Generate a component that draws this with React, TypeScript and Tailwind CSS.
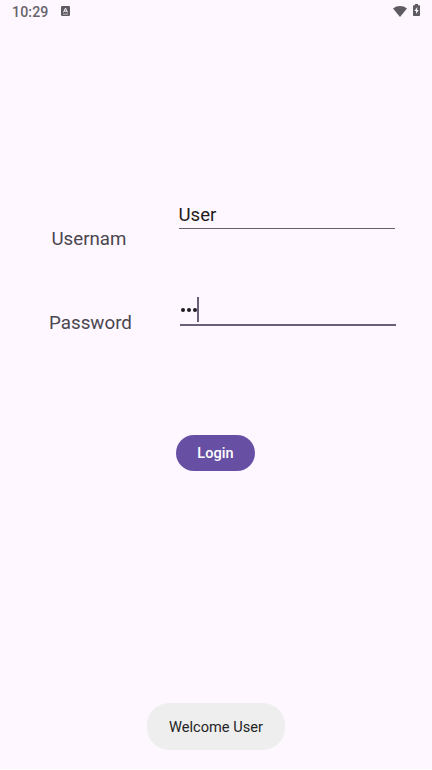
import React from "react";

function StatusBar() {
  return (
    <header className="flex h-[22px] items-center pl-[12px] pr-[12px] text-[#5f5b62]">
      <span className="w-[37px] whitespace-nowrap pt-[2px] text-[14.2px] font-medium leading-[22px] tracking-[0.1px] text-[#68646b]">10:29</span>
      <svg className="ml-[12px]" width="9" height="10" viewBox="0 0 9 10">
        <rect width="9" height="10" rx="1.2" fill="#5f5b62" />
        <path d="M2.5 6.4 4.5 2.1 6.5 6.4M3.3 5.2H5.7" fill="none" stroke="#fef7ff" strokeWidth="1" />
        <path d="M2 8.2H7" fill="none" stroke="#fef7ff" strokeWidth="0.6" />
      </svg>
      <div className="ml-auto flex items-center gap-[6px]">
        <svg width="14" height="11" viewBox="0 0 14 11">
          <path d="M0 2.5C4-.8 10-.8 14 2.5L7 11Z" fill="#5f5b62" />
        </svg>
        <svg className="-mt-[2px]" width="7" height="12" viewBox="0 0 7 12">
          <path d="M2 0H5V1.2H6.3Q7 1.2 7 2V11.2Q7 12 6.3 12H.7Q0 12 0 11.2V2Q0 1.2.7 1.2H2Z" fill="#5f5b62" />
          <path d="M4.3 3 1.4 7H3.1V10L5.7 6H4.1Z" fill="#fef7ff" />
        </svg>
      </div>
    </header>
  );
}

export default function App() {
  return (
    <div className="h-[770px] w-[432px] overflow-hidden bg-white font-[Roboto,sans-serif]">
      <div className="flex h-[769px] flex-col bg-[#fef7ff]">
        <StatusBar />
        <main className="flex flex-1 flex-col">
          <div className="mt-[178px] flex h-[50px] items-start">
            <label className="ml-[51.5px] mt-[27px] w-[127px] text-[18.7px] leading-[24px] text-[#4a464e]">Usernam</label>
            <div className="h-[29px] w-[216px] border-b border-[#6b5f6c] text-[18.6px] leading-[30px] text-[#1d1b20]">User</div>
          </div>
          <div className="mt-[44px] flex h-[42px] items-start">
            <label className="ml-[49px] mt-[17px] w-[131px] text-[18.8px] leading-[24px] text-[#4a464e]">Password</label>
            <div className="flex h-[32px] w-[216px] items-start border-b-2 border-[#6b6078] pl-[1px] pt-[3px]">
              <div className="mt-[10.5px] flex gap-[2px]">
                <i className="size-[4px] rounded-full bg-[#1d1b20]" />
                <i className="size-[4px] rounded-full bg-[#1d1b20]" />
                <i className="size-[4px] rounded-full bg-[#1d1b20]" />
              </div>
              <i className="h-[25px] w-[2px] bg-[#6b6078]" />
            </div>
          </div>
          <button className="ml-[176px] mt-[99px] h-[36px] w-[79px] rounded-full bg-[#6750a4] pt-px text-[14.5px] font-medium leading-[36px] tracking-[0.1px] text-white">
            Login
          </button>
          <div role="status" className="mb-[19px] ml-[147px] mt-auto h-[47px] w-[138px] rounded-[22px] bg-[#eeeeee] text-center text-[14.6px] leading-[48px] text-[#242424]">
            Welcome User
          </div>
        </main>
      </div>
    </div>
  );
}
